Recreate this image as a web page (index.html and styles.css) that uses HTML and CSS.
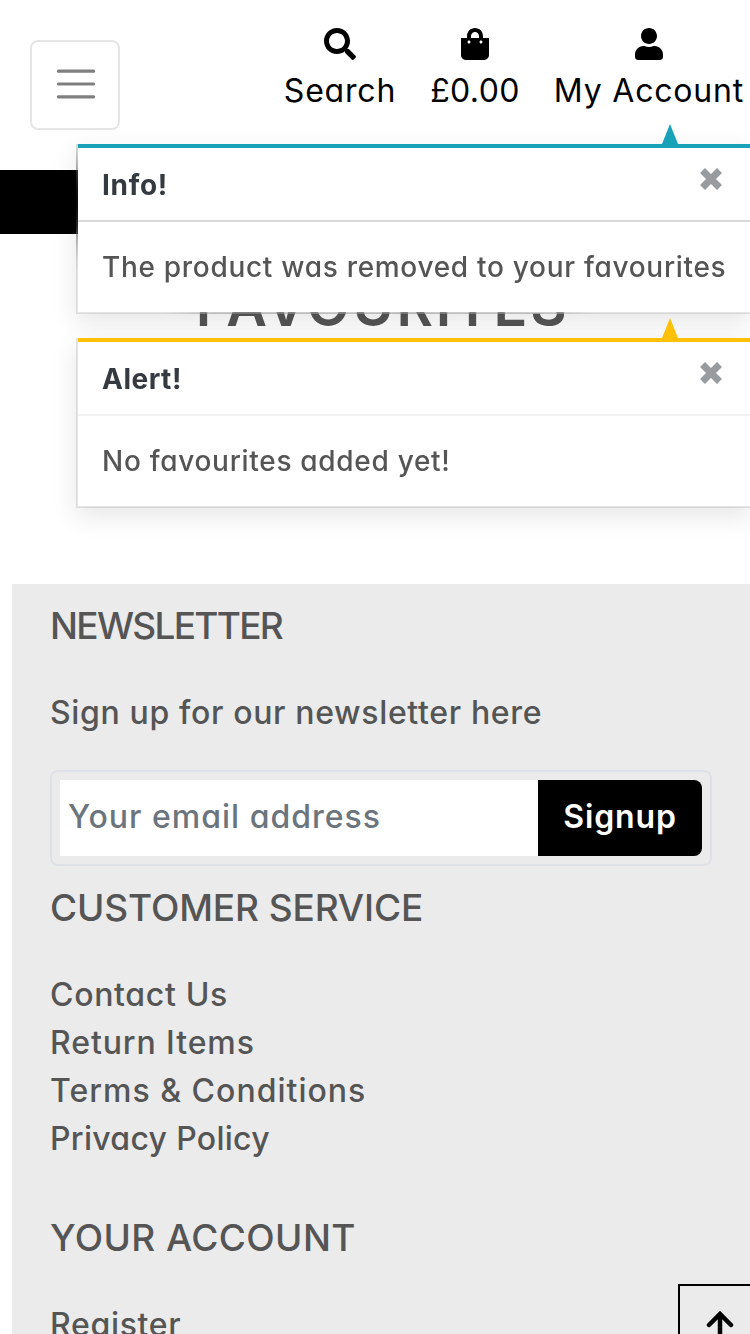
FILE: index.html
```
<!DOCTYPE html>
<html lang="en"><head><meta charset="utf-8"><title>Favourites</title><link rel="stylesheet" href="styles.css"></head>
<body>
<div class="page">
<header class="header">
  <button class="menu" aria-label="Menu"><svg viewBox="0 0 30 30"><path stroke="rgba(0,0,0,.5)" stroke-linecap="round" stroke-miterlimit="10" stroke-width="2" d="M4 7h22M4 15h22M4 23h22"/></svg></button>
  <nav class="nav">
    <a class="nav-item"><svg class="icon" width="32" height="32" viewBox="0 0 512 512"><path d="M505 442.7L405.3 343c-4.500-4.500-10.600-7-17-7H372c27.600-35.300 44-79.700 44-128C416 93.100 322.900 0 208 0S0 93.100 0 208s93.100 208 208 208c48.300 0 92.700-16.400 128-44v16.300c0 6.400 2.500 12.500 7 17l99.700 99.700c9.400 9.400 24.600 9.400 33.900 0l28.300-28.300c9.400-9.400 9.400-24.600.1-34zM208 336c-70.700 0-128-57.200-128-128 0-70.700 57.200-128 128-128 70.700 0 128 57.200 128 128 0 70.700-57.200 128-128 128z"/></svg><span class="t search">Search</span></a>
    <a class="nav-item"><svg class="icon" width="28" height="32" viewBox="0 0 448 512"><path d="M352 160v-32C352 57.420 294.579 0 224 0 153.420 0 96 57.420 96 128v32H0v272c0 44.183 35.817 80 80 80h288c44.183 0 80-35.817 80-80V160h-96zm-192-32c0-35.290 28.710-64 64-64s64 28.710 64 64v32H160v-32zm160 120c-13.255 0-24-10.745-24-24s10.745-24 24-24 24 10.745 24 24-10.745 24-24 24zm-192 0c-13.255 0-24-10.745-24-24s10.745-24 24-24 24 10.745 24 24-10.745 24-24 24z"/></svg><span class="t basket">£0.00</span></a>
    <a class="nav-item"><svg class="icon" width="28" height="32" viewBox="0 0 448 512"><path d="M224 256c70.700 0 128-57.300 128-128S294.700 0 224 0 96 57.300 96 128s57.300 128 128 128zm89.600 32h-16.700c-22.200 10.200-46.900 16-72.900 16s-50.600-5.800-72.900-16h-16.700C60.200 288 0 348.200 0 422.400V464c0 26.500 21.500 48 48 48h352c26.500 0 48-21.500 48-48v-41.600c0-74.200-60.200-134.400-134.400-134.400z"/></svg><span class="t account">My Account</span></a>
  </nav>
</header>
<div class="band"></div>
<main class="main"><h1 class="title"><span class="t favs">FAVOURITES</span></h1></main>
<footer class="footer">
  <h2 class="heading"><span class="t h-news">NEWSLETTER</span></h2>
  <p class="line"><span class="t signline">Sign up for our newsletter here</span></p>
  <form class="signup"><div class="field"><span class="t email">Your email address</span></div><div class="submit"><span class="t submit-text">Signup</span></div></form>
  <h2 class="heading heading-service"><span class="t h-service">CUSTOMER SERVICE</span></h2>
  <ul class="links"><li><span class="t l-contact">Contact Us</span></li><li><span class="t l-return">Return Items</span></li><li><span class="t l-terms">Terms &amp; Conditions</span></li><li><span class="t l-privacy">Privacy Policy</span></li></ul>
  <h2 class="heading heading-account"><span class="t h-account">YOUR ACCOUNT</span></h2>
  <ul class="links"><li><span class="t l-contact">Register</span></li></ul>
</footer>
<div class="toasts">
  <section class="toast info"><header class="toast-head"><strong class="t info-title">Info!</strong><svg class="close" width="24" height="24" viewBox="0 0 24 24"><path d="M3.500 3.500l17 17M20.500 3.500l-17 17"/></svg></header><p class="toast-body"><span class="t">The product was removed to your favourites</span></p></section>
  <section class="toast alert"><header class="toast-head"><strong class="t alert-title">Alert!</strong><svg class="close" width="24" height="24" viewBox="0 0 24 24"><path d="M3.500 3.500l17 17M20.500 3.500l-17 17"/></svg></header><p class="toast-body"><span class="t">No favourites added yet!</span></p></section>
</div>
<a class="top" aria-label="Back to top"><svg width="28" height="32" viewBox="0 0 28 32"><path d="M14 30V4M3 15L14 4l11 11"/></svg></a>
</div>
</body></html>
```
FILE: styles.css
```
* { box-sizing: border-box; }
body { margin: 0; background: #fff; color: #555; font: 500 32px/48px Inter, "Open Sans", sans-serif; font-feature-settings: "cv11"; }
h1, h2, p, ul { margin: 0; padding: 0; font-weight: 500; }
ul { list-style: none; }
.page { position: relative; width: 750px; height: 1334px; overflow: hidden; }

/* Text tracking */
.t { white-space: nowrap; }
.search { letter-spacing: .8px; }
.basket { letter-spacing: .4px; }
.account { letter-spacing: .8px; }
.favs { letter-spacing: 2.700px; }
.h-news { letter-spacing: -1.700px; }
.h-service { letter-spacing: -.12px; }
.h-account { letter-spacing: .4px; }
.signline { letter-spacing: .65px; }
.email { letter-spacing: 1px; }
.submit-text { letter-spacing: .85px; }
.l-contact { letter-spacing: .67px; }
.l-return { letter-spacing: .9px; }
.l-terms { letter-spacing: 1px; }
.l-privacy { letter-spacing: .3px; }
.toast-body { letter-spacing: .7px; }
.info-title { letter-spacing: .7px; }
.alert-title { letter-spacing: .5px; }

/* Header */
.header { display: flex; justify-content: space-between; align-items: flex-start; height: 170px; padding: 28px 6px 0 30px; color: #000; }
.menu { width: 90px; height: 90px; margin-top: 12px; padding: 0 0 2px 2px; display: grid; place-items: center; background: none; border: 2px solid rgba(0,0,0,.1); border-radius: 8px; }
.menu svg { width: 48px; height: 48px; }
.nav { display: flex; gap: 34px; font-weight: 400; }
.nav-item { display: flex; flex-direction: column; align-items: center; gap: 7px; }
.icon { display: block; fill: #000; }
.band { height: 64px; background: #000; }
.main { height: 350px; margin-left: 12px; padding: 38px 0 0 3px; text-align: center; }
.title { font-size: 56px; font-weight: 600; line-height: 68px; }

/* Footer */
.footer { height: 750px; margin-left: 12px; padding: 18px 38px 0; background: #ebebeb; }
.heading { font-size: 37px; line-height: 48px; }
.line { margin-top: 39px; }
.signup { display: flex; margin-top: 33px; height: 96px; padding: 8px; border: 2px solid #dee2e6; border-radius: 8px; }
.field { flex: 1; background: #fff; padding: 13px 8px; color: #6c757d; }
.submit { width: 164px; padding: 13px 0; text-align: center; font-weight: 600; color: #fff; background: #000; border-radius: 0 8px 8px 0; }
.heading-service { margin-top: 18px; }
.heading-account { margin-top: 51px; }
.links { margin-top: 39px; }

/* Notifications */
.toasts { position: absolute; left: 76px; top: 144px; width: 676px; display: flex; flex-direction: column; gap: 24px; }
.toast { position: relative; height: 170px; border: 2px solid rgba(0,0,0,.1); border-top: 0; background: #fff; background-clip: padding-box; box-shadow: 0 8px 24px rgba(0,0,0,.1); backdrop-filter: blur(20px); font-size: 28px; }
.toast-head { display: flex; justify-content: space-between; height: 78px; padding: 13px 27px 0 24px; border-top: 4px solid #17a2b8; border-bottom: 2px solid #d9d9d9; color: #343a40; }
.toast-head strong { font-weight: 700; }
.toast::before { content: ""; position: absolute; left: 584px; top: -20px; border: 8px solid transparent; border-top: 0; border-bottom: 20px solid #17a2b8; }
.alert .toast-head { border-top-color: #ffc107; border-bottom-color: #f2f2f2; }
.alert::before { border-bottom-color: #ffc107; }
.close { margin-top: 6px; fill: none; stroke: #999c9f; stroke-width: 7; }
.toast-body { padding: 21px 24px; }

.top { position: absolute; left: 678px; top: 1284px; width: 84px; height: 84px; border: 2px solid #000; padding: 24px 0 0 26px; background: #ebebeb; }
.top svg { display: block; fill: none; stroke: #000; stroke-width: 4.500; stroke-linecap: round; }
```
